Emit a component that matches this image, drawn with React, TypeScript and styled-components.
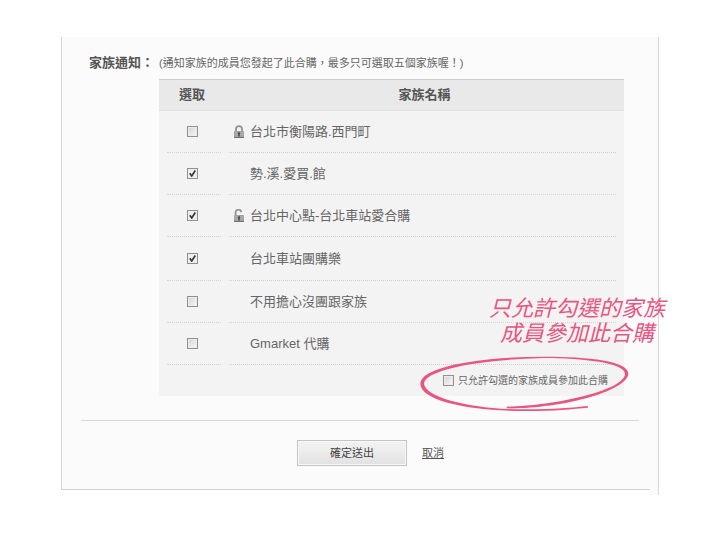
import React from "react";
import styled, { createGlobalStyle, css } from "styled-components";

const GlobalStyle = createGlobalStyle`
  * { box-sizing: border-box; }
  body {
    margin: 0;
    background: #fff;
    color: #666;
    font-family: "Liberation Sans", "Noto Sans CJK TC", sans-serif;
    font-size: 13px;
    line-height: 20px;
  }
`;

const Frame = styled.main`
  display: grid;
  grid-template-columns: 1fr 8px;
  margin: 37px 62px 0 61px;
  border-right: 1px solid #d8d8d8;
`;

const Panel = styled.form`
  margin-bottom: 5px;
  padding-left: 19px;
  background: #fbfbfb;
  border-left: 1px solid #d4d4d4;
  border-bottom: 1px solid #d4d4d4;
`;

const Edge = styled.div`
  background: #fbfbfb;
`;

const Field = styled.section`
  display: grid;
  grid-template-columns: 70px 1fr;
  padding: 16px 26px 24px 8px;
`;

const FieldLabel = styled.h2`
  margin: 0;
  color: #555;
  font-size: 13px;
  font-weight: bold;
  line-height: 20px;
  white-space: nowrap;
`;

const Hint = styled.p`
  margin: 0 0 6px;
  font-size: 11px;
  line-height: 20px;
`;

const Table = styled.table`
  width: 100%;
  table-layout: fixed;
  border-collapse: collapse;
  background: #f3f3f3;
`;

const PickColumn = styled.col`
  width: 66px;
`;

const HeadCell = styled.th`
  height: 31px;
  padding: 0;
  color: #555;
  background: #e9e9e9;
  border-top: 1px solid #cfcfcf;
  border-bottom: 1px solid #e2e2e2;
  font-weight: bold;
`;

const Cell = styled.td`
  padding: 0;
`;

const rowLine = css<{ $tall?: boolean }>`
  display: flex;
  align-items: center;
  height: ${(p) => (p.$tall ? 44 : 42)}px;
  border-bottom: 1px dotted #d2d2d2;
`;

const Pick = styled.div<{ $tall?: boolean }>`
  ${rowLine}
  justify-content: center;
  margin: 0 4px 0 8px;
  padding-right: 4px;
`;

const Name = styled.label<{ $tall?: boolean }>`
  ${rowLine}
  gap: 5px;
  margin: 0 8px 0 4px;
  padding-left: 4px;
`;

const IconSlot = styled.span`
  display: flex;
  width: 12px;
`;

const Checkbox = styled.input`
  appearance: none;
  flex: none;
  width: 11px;
  height: 11px;
  margin: 0;
  border: 1px solid #909090;
  background: linear-gradient(135deg, #d2d2d2, #fafafa);
  box-shadow: inset 0 0 0 1px #ededed;

  &:checked {
    background: #f0f0f0
      url("data:image/svg+xml,%3Csvg xmlns='http://www.w3.org/2000/svg' viewBox='0 0 9 9'%3E%3Cpath d='M1.8 4.2 3.7 6.9 7.3 1.5' fill='none' stroke='%23383838' stroke-width='1.7'/%3E%3C/svg%3E")
      center / 9px 9px no-repeat;
  }
`;

const Limit = styled.div`
  position: relative;
  display: flex;
  justify-content: flex-end;
  height: 31px;
  padding-right: 16px;
`;

const LimitLabel = styled.label`
  display: flex;
  align-items: center;
  gap: 4px;
  font-size: 10px;
`;

const Ring = styled.svg`
  position: absolute;
  top: -11px;
  right: -8px;
  width: 215px;
  height: 60px;
  fill: #ea5580;
  pointer-events: none;
`;

const Callout = styled.p`
  position: absolute;
  top: -69px;
  right: -41px;
  margin: 0;
  color: #ea5580;
  font-size: 22px;
  font-style: italic;
  line-height: 25px;
  text-align: center;
  white-space: nowrap;
`;

const Actions = styled.div`
  display: flex;
  align-items: center;
  justify-content: center;
  gap: 15px;
  margin-right: 11px;
  padding: 19px 0 23px 21px;
  border-top: 1px solid #d6d6d6;
`;

const Submit = styled.button`
  width: 110px;
  height: 26px;
  padding: 0;
  color: #444;
  font: inherit;
  font-size: 11px;
  background: linear-gradient(#f3f3f3, #e2e2e2);
  border: 1px solid #c4c4c4;
  box-shadow: inset 0 0 0 1px #f8f8f8;
`;

const Cancel = styled.a`
  color: #555;
  font-size: 11px;
  text-decoration: underline;
`;

type Lock = "closed" | "open";

function LockIcon({ state }: { state: Lock }) {
  return (
    <svg width="12" height="14" viewBox="0 0 12 14" aria-hidden="true">
      <path
        d={state === "closed" ? "M3 7V4.2a3 3 0 0 1 6 0V7" : "M2.6 7V3.8a2.8 2.8 0 0 1 5.6-.6"}
        fill="none"
        stroke="#929292"
        strokeWidth="1.8"
      />
      <rect x="1" y="6" width="10" height="7" rx="0.6" fill="#a2a2a2" />
      <path d="M1 12.5h10" stroke="#707070" />
      <path d="M1.5 7.5h9M1.5 9.5h9" stroke="#b8b8b8" strokeWidth="0.6" />
      <path d="M4.8 8.4a1.2 1.2 0 0 1 2.4 0l-.5 1v2H5.3v-2z" fill="#454545" />
    </svg>
  );
}

const families: { id: string; name: string; checked?: boolean; lock?: Lock; tall?: boolean }[] = [
  { id: "ximen", name: "台北市衡陽路.西門町", lock: "closed" },
  { id: "shixi", name: "勢.溪.愛買.館", checked: true },
  { id: "center", name: "台北中心點-台北車站愛合購", checked: true, lock: "open" },
  { id: "station", name: "台北車站團購樂", checked: true, tall: true },
  { id: "noworry", name: "不用擔心沒團跟家族" },
  { id: "gmarket", name: "Gmarket 代購" },
];

export default function App() {
  return (
    <>
      <GlobalStyle />
      <Frame>
        <Panel onSubmit={(e) => e.preventDefault()}>
          <Field>
            <FieldLabel>家族通知：</FieldLabel>
            <div>
              <Hint>(通知家族的成員您發起了此合購，最多只可選取五個家族喔！)</Hint>
              <Table>
                <colgroup>
                  <PickColumn />
                  <col />
                </colgroup>
                <thead>
                  <tr>
                    <HeadCell scope="col">選取</HeadCell>
                    <HeadCell scope="col">家族名稱</HeadCell>
                  </tr>
                </thead>
                <tbody>
                  {families.map((f) => (
                    <tr key={f.id}>
                      <Cell>
                        <Pick $tall={f.tall}>
                          <Checkbox type="checkbox" id={f.id} defaultChecked={f.checked} />
                        </Pick>
                      </Cell>
                      <Cell>
                        <Name htmlFor={f.id} $tall={f.tall}>
                          <IconSlot>{f.lock && <LockIcon state={f.lock} />}</IconSlot>
                          {f.name}
                        </Name>
                      </Cell>
                    </tr>
                  ))}
                </tbody>
                <tfoot>
                  <tr>
                    <Cell colSpan={2}>
                      <Limit>
                        <LimitLabel>
                          <Checkbox type="checkbox" />
                          只允許勾選的家族成員參加此合購
                        </LimitLabel>
                        <Ring viewBox="21 219 645 180" aria-hidden="true">
                          <path d="M290 377C430 375 640 330 645 280C648 245 520 232 400 231C230 235 46 262 42 308C45 350 190 386 350 385C430 385 490 380 533 375L534 380C490 384 430 390 350 390C180 390 32 360 31 308C32 255 220 227 400 227C540 227 658 240 655 280C645 335 440 385 290 382Z" />
                        </Ring>
                        <Callout>
                          只允許勾選的家族
                          <br />
                          成員參加此合購
                        </Callout>
                      </Limit>
                    </Cell>
                  </tr>
                </tfoot>
              </Table>
            </div>
          </Field>
          <Actions>
            <Submit type="submit">確定送出</Submit>
            <Cancel href="#">取消</Cancel>
          </Actions>
        </Panel>
        <Edge />
      </Frame>
    </>
  );
}
